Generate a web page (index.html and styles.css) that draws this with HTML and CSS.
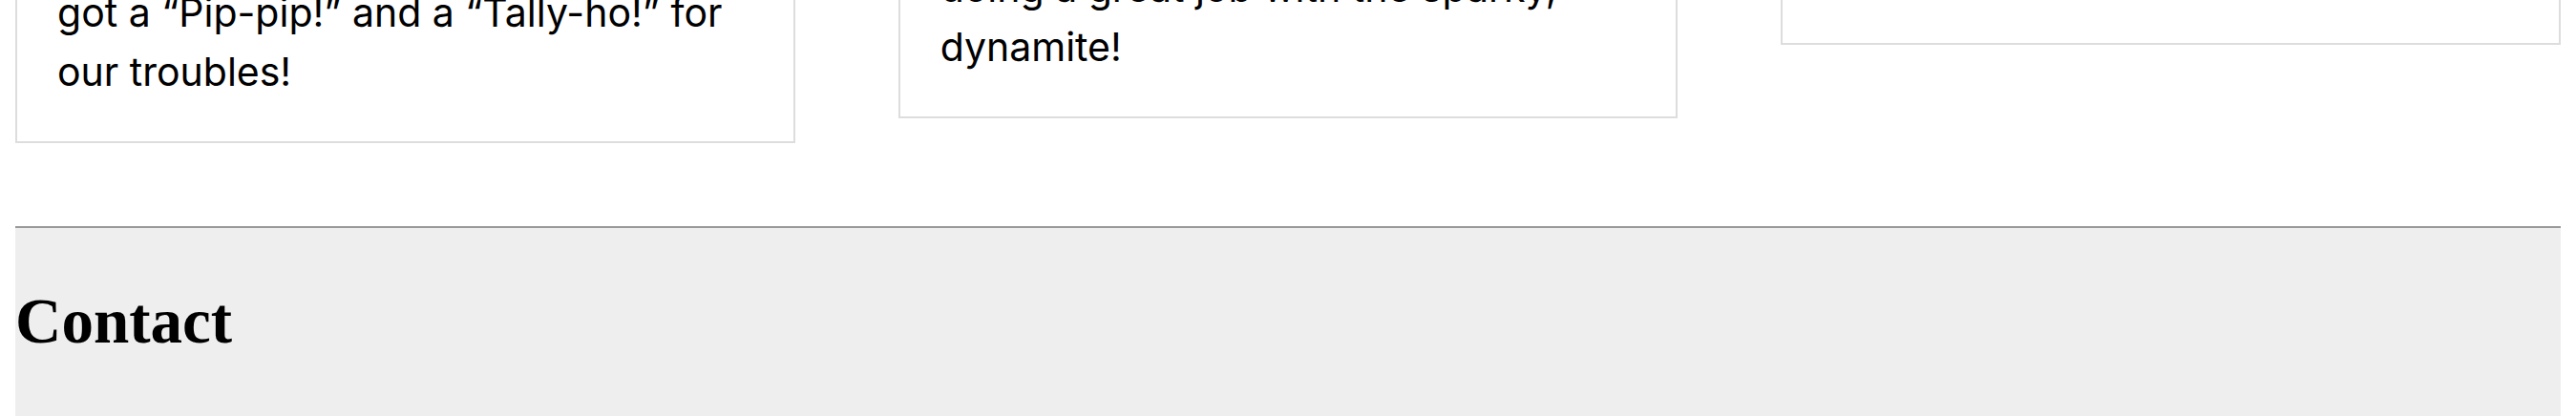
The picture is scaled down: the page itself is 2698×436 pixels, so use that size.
FILE: index.html
```html
<!DOCTYPE html>
<html lang="en">
<head>
<meta charset="utf-8">
<title>Adventures</title>
<link rel="stylesheet" href="styles.css">
</head>
<body>
<section class="testimonials">
  <article class="card">
    <div class="photo"></div>
    <p class="quote">We sailed the Thames to bring the Crown Jewels home, and we<br>got a “Pip-pip!” and a “Tally-ho!” for our troubles!</p>
  </article>
  <article class="card">
    <div class="photo photo--tall"></div>
    <p class="quote">Bang! Crash! Everybody aboard was doing a great job with the sparky,<br>dynamite!</p>
  </article>
  <article class="card">
    <div class="photo photo--short"></div>
    <p class="quote">Best voyage we ever had. The parrot still talks about it, and so do we, every single night.</p>
  </article>
</section>
<footer class="contact">
  <h2 class="contact-title">Contact</h2>
  <p class="contact-text">Send a message in a bottle to the harbour master.</p>
</footer>
</body>
</html>
```
FILE: styles.css
```css
html, body {
  background: #ffffff;
}
body {
  margin: 0 16px;
  color: #000000;
  font-family: Inter, "Liberation Sans", sans-serif;
}
.testimonials {
  display: grid;
  grid-template-columns: repeat(3, 1fr);
  column-gap: 108px;
  align-items: start;
  margin-top: -456px;
  margin-bottom: 87px;
}
.card {
  border: 2px solid #dddddd;
  padding: 42px;
  background: #ffffff;
}
.photo {
  height: 240px;
  margin-bottom: 30px;
  background: #f4f4f4;
}
.photo--tall {
  height: 276px;
}
.photo--short {
  height: 199px;
}
.quote {
  margin: 0;
  font-size: 41px;
  line-height: 62px;
}
.contact {
  border-top: 2px solid #999999;
  background: #eeeeee;
  padding: 57px 0 60px;
}
.contact-title {
  margin: 0;
  font-family: "Liberation Serif", serif;
  font-weight: bold;
  font-size: 67px;
  line-height: 1.2;
}
.contact-text {
  margin: 120px 0 0;
  font-size: 40px;
}
```
